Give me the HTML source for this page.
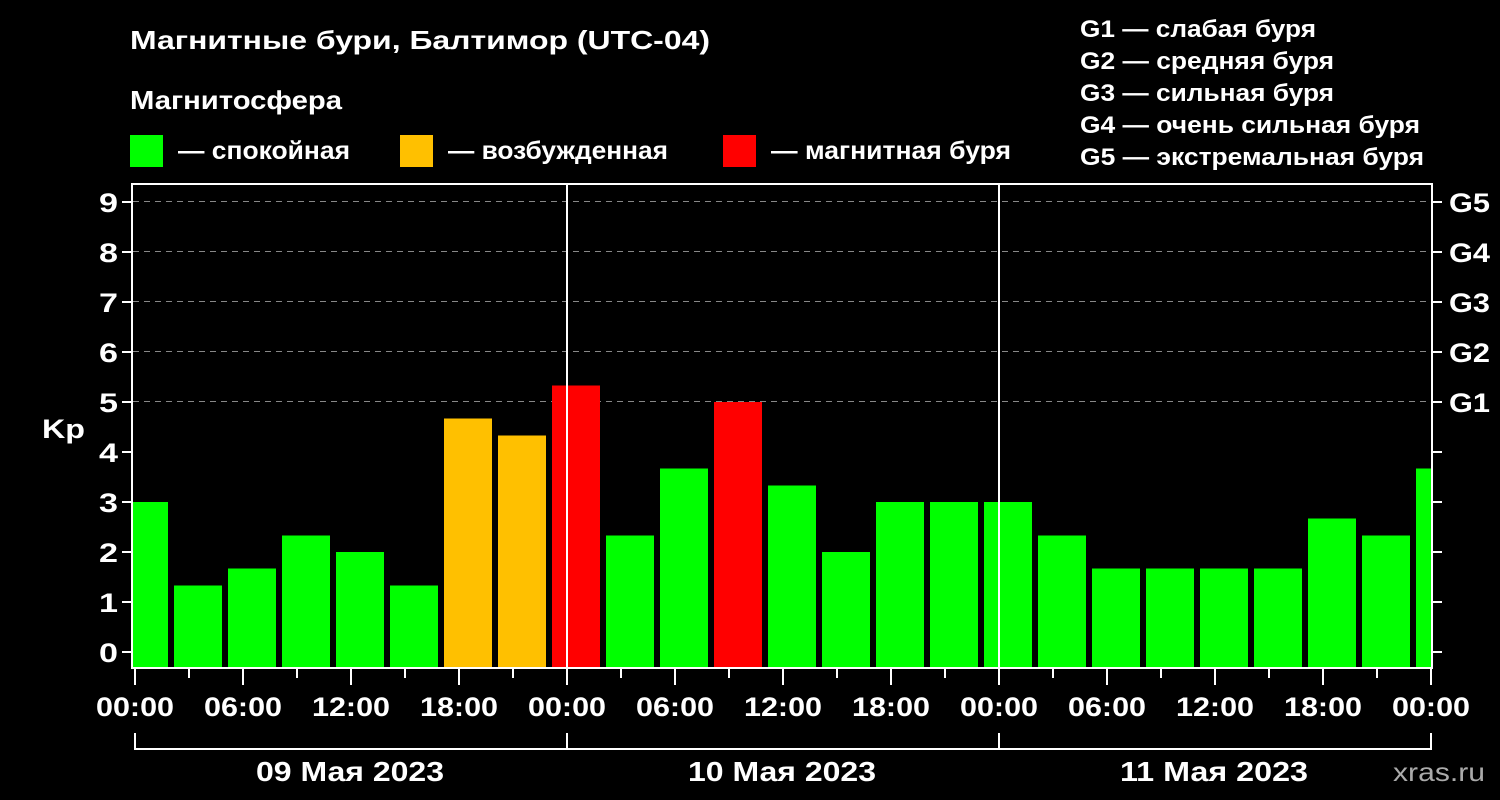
<!DOCTYPE html>
<html><head><meta charset="utf-8"><style>
html,body{margin:0;padding:0;background:#000;width:1500px;height:800px;overflow:hidden}
svg{display:block}
text{font-family:"Liberation Sans",sans-serif;font-weight:bold;fill:#fff}
</style></head><body>
<svg width="1500" height="800" xmlns="http://www.w3.org/2000/svg">
<rect width="1500" height="800" fill="#000"/>
<text x="130" y="49" font-size="26" textLength="580" lengthAdjust="spacingAndGlyphs">Магнитные бури, Балтимор (UTC-04)</text>
<text x="130" y="109" font-size="26" textLength="212" lengthAdjust="spacingAndGlyphs">Магнитосфера</text>
<rect x="130" y="135" width="33" height="32" fill="#00ff00"/>
<text x="178" y="159" font-size="25" textLength="172" lengthAdjust="spacingAndGlyphs">— спокойная</text>
<rect x="400" y="135" width="33" height="32" fill="#ffc000"/>
<text x="448" y="159" font-size="25" textLength="220" lengthAdjust="spacingAndGlyphs">— возбужденная</text>
<rect x="723" y="135" width="33" height="32" fill="#ff0000"/>
<text x="771" y="159" font-size="25" textLength="240" lengthAdjust="spacingAndGlyphs">— магнитная буря</text>
<g font-size="24" lengthAdjust="spacingAndGlyphs">
<text x="1080" y="37" textLength="236" lengthAdjust="spacingAndGlyphs">G1 — слабая буря</text>
<text x="1080" y="69" textLength="254" lengthAdjust="spacingAndGlyphs">G2 — средняя буря</text>
<text x="1080" y="101" textLength="254" lengthAdjust="spacingAndGlyphs">G3 — сильная буря</text>
<text x="1080" y="133" textLength="340" lengthAdjust="spacingAndGlyphs">G4 — очень сильная буря</text>
<text x="1080" y="165" textLength="344" lengthAdjust="spacingAndGlyphs">G5 — экстремальная буря</text>
</g>
<g stroke="#888" stroke-width="1" stroke-dasharray="6,5">
<line x1="133" x2="1432" y1="201.5" y2="201.5"/>
<line x1="133" x2="1432" y1="251.5" y2="251.5"/>
<line x1="133" x2="1432" y1="301.5" y2="301.5"/>
<line x1="133" x2="1432" y1="351.5" y2="351.5"/>
<line x1="133" x2="1432" y1="401.5" y2="401.5"/>
</g>
<g id="bars"></g>
<line x1="567" y1="183" x2="567" y2="668" stroke="#fff" stroke-width="2"/>
<line x1="999" y1="183" x2="999" y2="668" stroke="#fff" stroke-width="2"/>
<rect x="132" y="184" width="1300" height="484" fill="none" stroke="#fff" stroke-width="2"/>
<g id="ticks" stroke="#fff" stroke-width="2"></g>
<g font-size="27" text-anchor="end" id="ylab"></g>
<text x="42" y="438" font-size="27" textLength="43" lengthAdjust="spacingAndGlyphs">Kp</text>
<g font-size="27">
<text x="1449" y="212" textLength="41" lengthAdjust="spacingAndGlyphs">G5</text><text x="1449" y="262" textLength="41" lengthAdjust="spacingAndGlyphs">G4</text><text x="1449" y="312" textLength="41" lengthAdjust="spacingAndGlyphs">G3</text><text x="1449" y="362" textLength="41" lengthAdjust="spacingAndGlyphs">G2</text><text x="1449" y="412" textLength="41" lengthAdjust="spacingAndGlyphs">G1</text>
</g>
<g font-size="27" text-anchor="middle" id="xlab"></g>
<path d="M135 733V749H1431V733M567 733V749M999 733V749" stroke="#fff" stroke-width="2" fill="none"/>
<g font-size="28" text-anchor="middle">
<text x="350" y="781" textLength="188" lengthAdjust="spacingAndGlyphs">09 Мая 2023</text><text x="782" y="781" textLength="188" lengthAdjust="spacingAndGlyphs">10 Мая 2023</text><text x="1214" y="781" textLength="188" lengthAdjust="spacingAndGlyphs">11 Мая 2023</text>
</g>
<text x="1393" y="781" font-size="26" textLength="92" lengthAdjust="spacingAndGlyphs" style="fill:#aaa;font-weight:normal">xras.ru</text>
</svg>
<script>
var v=[3,1.33,1.67,2.33,2,1.33,4.67,4.33,5.33,2.33,3.67,5,3.33,2,3,3,3,2.33,1.67,1.67,1.67,1.67,2.67,2.33,3.67];
var b=document.getElementById('bars'),h='';
v.forEach(function(k,i){var x0=120+54*i,x1=x0+48;x0=Math.max(x0,133);x1=Math.min(x1,1431);
var c=k>=5?'#ff0000':(k>=4?'#ffc000':'#00ff00');var y=652-50*k;
h+='<rect x="'+x0+'" y="'+y+'" width="'+(x1-x0)+'" height="'+(668-y)+'" fill="'+c+'"/>';});
b.innerHTML=h;
var t='',yl='';for(var i=0;i<=9;i++){var y=652-50*i;t+='<line x1="122" x2="132" y1="'+y+'" y2="'+y+'"/><line x1="1432" x2="1442" y1="'+y+'" y2="'+y+'"/>';yl+='<text x="118" y="'+(y+10)+'" textLength="19" lengthAdjust="spacingAndGlyphs">'+i+'</text>';}
var xl='',lab=['00:00','06:00','12:00','18:00'];
for(var j=0;j<=24;j++){var x=135+54*j;t+='<line x1="'+x+'" x2="'+x+'" y1="668" y2="'+(j%2==0?685:678)+'"/>';if(j%2==0)xl+='<text x="'+x+'" y="716" textLength="78" lengthAdjust="spacingAndGlyphs">'+lab[(j/2)%4]+'</text>';}
document.getElementById('ticks').innerHTML=t;document.getElementById('ylab').innerHTML=yl;document.getElementById('xlab').innerHTML=xl;
</script>
</body></html>
